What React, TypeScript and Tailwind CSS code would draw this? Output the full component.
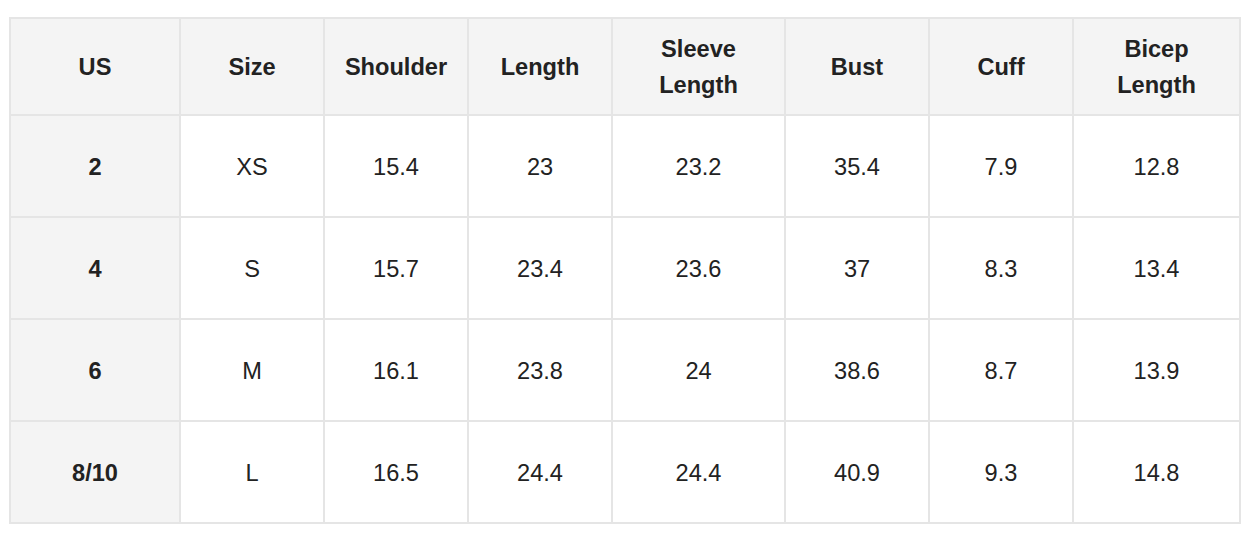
import React from "react";

const headers: string[][] = [
  ["US"],
  ["Size"],
  ["Shoulder"],
  ["Length"],
  ["Sleeve", "Length"],
  ["Bust"],
  ["Cuff"],
  ["Bicep", "Length"],
];

const rows: string[][] = [
  ["2", "XS", "15.4", "23", "23.2", "35.4", "7.9", "12.8"],
  ["4", "S", "15.7", "23.4", "23.6", "37", "8.3", "13.4"],
  ["6", "M", "16.1", "23.8", "24", "38.6", "8.7", "13.9"],
  ["8/10", "L", "16.5", "24.4", "24.4", "40.9", "9.3", "14.8"],
];

const widths = [170, 144, 144, 144, 173, 144, 144, 167];

export default function App() {
  return (
    <div className="w-[1253px] h-[538px] bg-white pt-[17px] pl-[9px] font-['Liberation_Sans',Arial,sans-serif] text-[#222222]">
      <table className="table-fixed border-collapse w-[1232px] text-[23.6px]">
        <colgroup>
          {widths.map((w, i) => (
            <col key={i} style={{ width: w }} />
          ))}
        </colgroup>
        <thead>
          <tr className="h-[97px]">
            {headers.map((h, i) => (
              <th
                key={i}
                className="border-2 border-[#e5e5e5] bg-[#f4f4f4] font-bold text-center align-middle leading-[36px] p-0"
              >
                {h.map((line, j) => (
                  <div key={j}>{line}</div>
                ))}
              </th>
            ))}
          </tr>
        </thead>
        <tbody>
          {rows.map((r, ri) => (
            <tr key={ri} className="h-[102px]">
              {r.map((c, ci) => (
                <td
                  key={ci}
                  className={
                    ci === 0
                      ? "border-2 border-[#e5e5e5] bg-[#f4f4f4] font-bold text-center align-middle p-0 pt-[3px]"
                      : "border-2 border-[#e5e5e5] bg-white text-center align-middle p-0 pt-[3px]"
                  }
                >
                  {c}
                </td>
              ))}
            </tr>
          ))}
        </tbody>
      </table>
    </div>
  );
}
